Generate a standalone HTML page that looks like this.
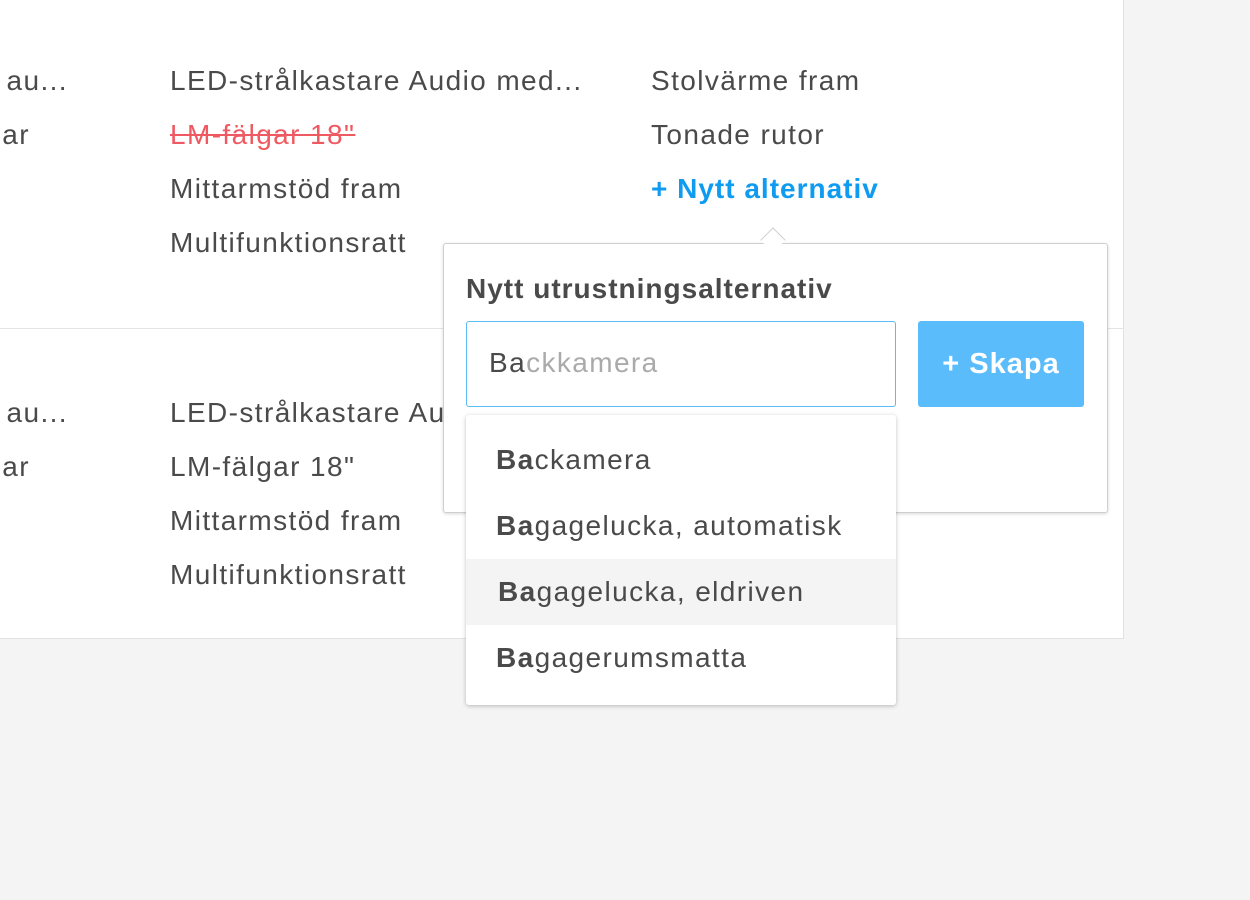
<!DOCTYPE html>
<html><head><meta charset="utf-8"><style>
html,body{margin:0;width:1250px;height:900px;overflow:hidden}
body{background:#f4f4f4;font-family:"Liberation Sans",sans-serif;color:#4a4a4a;position:relative}
.wrap{position:absolute;left:0;top:0;width:1250px;height:900px;overflow:hidden}
.card{position:absolute;left:0;top:0;width:1123px;height:638px;background:#fff;border-right:1px solid #e2e2e2;border-bottom:1px solid #e2e2e2}
.hr{position:absolute;left:0;top:328px;width:1123px;height:1px;background:#e4e4e4}
.t{position:absolute;font-size:28px;letter-spacing:1.4px;line-height:30px;white-space:nowrap}
.r{text-align:right}
.pop{position:absolute;left:443px;top:243px;width:663px;height:268px;background:#fff;border:1px solid #cfcfcf;border-radius:3px;box-shadow:0 1px 3px rgba(0,0,0,.15)}
.arrow{position:absolute;left:764px;top:231px;width:17px;height:17px;background:#fff;border-left:1px solid #cfcfcf;border-top:1px solid #cfcfcf;transform:rotate(45deg)}
.input{position:absolute;left:466px;top:321px;width:428px;height:84px;border:1px solid #5bbcf7;border-radius:3px;background:#fff}
.btn{position:absolute;left:918px;top:321px;width:166px;height:86px;background:#5bbcfc;border-radius:3px;color:#fff;font-weight:bold;font-size:29px;letter-spacing:1px;line-height:86px;text-align:center}
.dd{position:absolute;left:466px;top:415px;width:430px;height:290px;background:#fff;border-radius:3px;box-shadow:0 1px 4px rgba(0,0,0,.25)}
.it{position:absolute;left:0;width:430px;height:66px;font-size:28px;letter-spacing:1.4px;line-height:66px;padding-left:30px;box-sizing:border-box;white-space:nowrap}
</style></head><body><div class="wrap">
<div class="card"></div>
<div class="hr"></div>
<div class="t r" style="right:1182px;top:66px">Skinnklädsel au...</div>
<div class="t r" style="right:1220px;top:120px">Fälgar</div>
<div class="t" style="left:170px;top:66px">LED-strålkastare Audio med...</div>
<div class="t" style="left:170px;top:120px;color:#ef5a62;text-decoration:line-through">LM-fälgar 18"</div>
<div class="t" style="left:170px;top:174px">Mittarmstöd fram</div>
<div class="t" style="left:170px;top:228px">Multifunktionsratt</div>
<div class="t" style="left:651px;top:66px">Stolvärme fram</div>
<div class="t" style="left:651px;top:120px">Tonade rutor</div>
<div class="t" style="left:651px;top:174px;color:#0e9bf0;font-weight:bold;letter-spacing:1px">+ Nytt alternativ</div>
<div class="t r" style="right:1182px;top:398px">Skinnklädsel au...</div>
<div class="t r" style="right:1220px;top:452px">Fälgar</div>
<div class="t" style="left:170px;top:398px">LED-strålkastare Audio med...</div>
<div class="t" style="left:170px;top:452px">LM-fälgar 18"</div>
<div class="t" style="left:170px;top:506px">Mittarmstöd fram</div>
<div class="t" style="left:170px;top:560px">Multifunktionsratt</div>
<div class="pop"></div>
<div class="arrow"></div>
<div class="t" style="left:466px;top:274px;font-weight:bold;letter-spacing:1px">Nytt utrustningsalternativ</div>
<div class="input"></div>
<div class="t" style="left:489px;top:348px">Ba<span style="color:#aaa">ckkamera</span></div>
<div class="btn">+ Skapa</div>
<div class="dd">
<div class="it" style="top:12px"><b>Ba</b>ckamera</div>
<div class="it" style="top:78px"><b>Ba</b>gagelucka, automatisk</div>
<div class="it" style="top:144px;background:#f4f4f4;padding-left:32px"><b>Ba</b>gagelucka, eldriven</div>
<div class="it" style="top:210px"><b>Ba</b>gagerumsmatta</div>
</div>
</div></body></html>
